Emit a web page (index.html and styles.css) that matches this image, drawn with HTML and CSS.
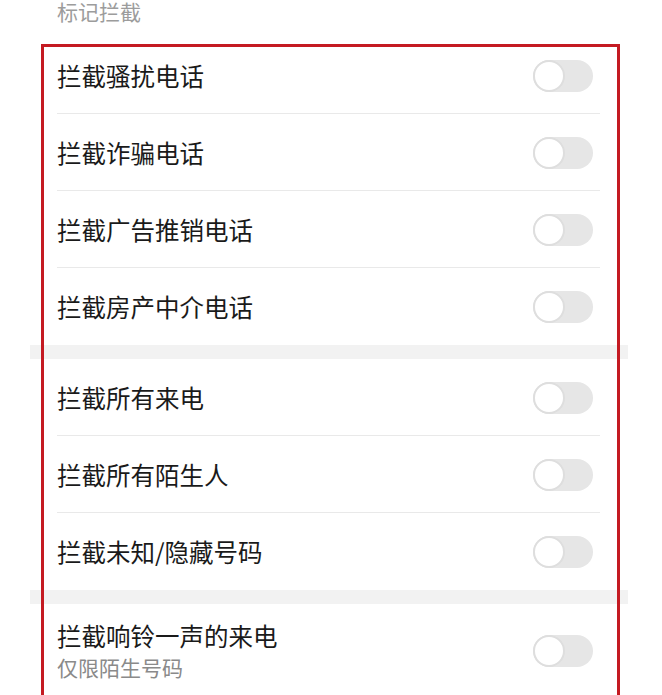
FILE: index.html
```html
<!DOCTYPE html>
<html lang="zh-CN">
<head>
<meta charset="utf-8">
<title>标记拦截</title>
<link rel="stylesheet" href="styles.css">
</head>
<body>
<div class="page">
  <div class="section-title">标记拦截</div>
  <div class="list">
    <div class="group">
      <div class="row"><span class="label">拦截骚扰电话</span><span class="switch"><span class="knob"></span></span></div>
      <div class="row"><span class="label">拦截诈骗电话</span><span class="switch"><span class="knob"></span></span></div>
      <div class="row"><span class="label">拦截广告推销电话</span><span class="switch"><span class="knob"></span></span></div>
      <div class="row"><span class="label">拦截房产中介电话</span><span class="switch"><span class="knob"></span></span></div>
    </div>
    <div class="gap"></div>
    <div class="group">
      <div class="row"><span class="label">拦截所有来电</span><span class="switch"><span class="knob"></span></span></div>
      <div class="row"><span class="label">拦截所有陌生人</span><span class="switch"><span class="knob"></span></span></div>
      <div class="row"><span class="label">拦截未知/隐藏号码</span><span class="switch"><span class="knob"></span></span></div>
    </div>
    <div class="gap"></div>
    <div class="group">
      <div class="row row-tall">
        <span class="text-stack">
          <span class="label">拦截响铃一声的来电</span>
          <span class="sub">仅限陌生号码</span>
        </span>
        <span class="switch"><span class="knob"></span></span>
      </div>
    </div>
  </div>
  <div class="highlight"></div>
</div>
</body>
</html>
```

FILE: styles.css
```css
html, body {
  margin: 0;
  padding: 0;
  background: #ffffff;
  overflow: hidden;
  height: 100%;
}

body {
  font-family: "Noto Sans CJK SC", "Noto Sans", sans-serif;
  color: #1a1a1a;
}

.page {
  position: relative;
  width: 662px;
  height: 695px;
  overflow: hidden;
}

.section-title {
  height: 37px;
  padding: 1px 0 0 57px;
  font-size: 21px;
  line-height: 20px;
  color: #9c9c9c;
  box-sizing: border-box;
}

.list {
  margin: 0 34px 0 30px;
}

.group {
  display: flex;
  flex-direction: column;
}

.row {
  display: flex;
  align-items: center;
  justify-content: space-between;
  height: 77px;
  box-sizing: border-box;
  padding: 0 35px 0 27px;
  position: relative;
}

.row::after {
  content: "";
  position: absolute;
  left: 27px;
  right: 28px;
  bottom: 0;
  height: 1px;
  background: #e9e9e9;
}

.row:last-child::after {
  display: none;
}

.row-tall {
  height: 94px;
}

.label {
  font-size: 24.5px;
  line-height: 30px;
  color: #1a1a1a;
}

.text-stack {
  display: flex;
  flex-direction: column;
  gap: 2px;
}

.sub {
  font-size: 21px;
  line-height: 28px;
  color: #8a8a8a;
}

.gap {
  height: 14px;
  background: #f2f2f2;
}

.switch {
  position: relative;
  width: 60px;
  height: 32px;
  border-radius: 16px;
  background: #e6e6e6;
  flex: none;
}

.knob {
  position: absolute;
  left: 0;
  top: 0;
  width: 32px;
  height: 32px;
  box-sizing: border-box;
  border-radius: 50%;
  background: #ffffff;
  border: 2px solid #dedede;
}

.highlight {
  position: absolute;
  left: 41px;
  top: 44px;
  width: 579px;
  height: 700px;
  box-sizing: border-box;
  border: 3px solid #c41a22;
  pointer-events: none;
}
```
